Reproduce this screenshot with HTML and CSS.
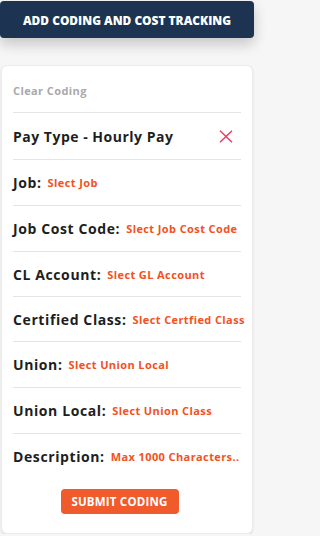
FILE: index.html
```html
<!DOCTYPE html>
<html>
<head>
<meta charset="utf-8">
<link rel="stylesheet" href="styles.css">
</head>
<body>
<button class="top-btn">ADD CODING AND COST TRACKING</button>
<div class="card">
  <div class="row clear-row"><span class="clear">Clear Coding</span></div>
  <div class="row pay-row">
    <span class="pay">Pay Type - Hourly Pay</span>
    <svg class="x" width="14" height="13" viewBox="0 0 14 13"><path d="M1 0.8 L13 12.2 M13 0.8 L1 12.2" stroke="#ee3d63" stroke-width="1.5" fill="none"/></svg>
  </div>
  <div class="row r46"><span class="label">Job:</span><span class="val">Slect Job</span></div>
  <div class="row r46"><span class="label">Job Cost Code:</span><span class="val">Slect Job Cost Code</span></div>
  <div class="row r45"><span class="label">CL Account:</span><span class="val">Slect GL Account</span></div>
  <div class="row r45"><span class="label">Certified Class:</span><span class="val">Slect Certfied Class</span></div>
  <div class="row r46"><span class="label">Union:</span><span class="val">Slect Union Local</span></div>
  <div class="row r46"><span class="label">Union Local:</span><span class="val">Slect Union Class</span></div>
  <div class="row desc-row"><span class="label">Description:</span><span class="val">Max 1000 Characters..</span></div>
  <div class="submit-wrap"><button class="submit">SUBMIT CODING</button></div>
</div>
</body>
</html>
```
FILE: styles.css
```css
* { box-sizing: border-box; }
html { background: #f6f6f6; }
html, body { margin: 0; padding: 0; }
body {
  font-family: "Open Sans", "Liberation Sans", sans-serif;
  padding-top: 1px;
}
.top-btn {
  display: block;
  width: 254px;
  height: 37px;
  margin: 0;
  border: none;
  border-radius: 4px;
  background: #1c3352;
  color: #fff;
  font-family: inherit;
  font-weight: 800;
  font-size: 11.9px;
  box-shadow: 0 6px 14px rgba(0,0,0,0.2);
  padding: 0;
}
.card {
  margin: 27px 0 0 1px;
  width: 252px;
  height: 469px;
  background: #fff;
  border: 1px solid #ececec;
  border-radius: 6px;
  box-shadow: 0 1px 2px rgba(0,0,0,0.12);
  padding: 0 11px;
  display: flex;
  flex-direction: column;
}
.row {
  display: flex;
  align-items: center;
  gap: 6px;
  border-bottom: 1px solid #e4e4e4;
  flex: none;
}
.r46 { height: 46px; }
.r45 { height: 45px; }
.clear-row { height: 47px; padding-top: 2px; }
.pay-row { height: 47px; justify-content: space-between; padding-right: 8px; }
.clear { color: #a9a9a9; font-weight: 700; font-size: 11px; letter-spacing: 0.4px; }
.pay { color: #1e1e1e; font-weight: 700; font-size: 14px; letter-spacing: 0.5px; }
.label { color: #1e1e1e; font-weight: 700; font-size: 14px; letter-spacing: 0.6px; white-space: nowrap; }
.val { color: #f4511e; font-weight: 700; font-size: 11px; letter-spacing: 0.4px; white-space: nowrap; }
.desc-row { border-bottom: none; height: 44px; }
.submit-wrap { display: flex; justify-content: center; padding-right: 15px; margin-top: 11px; }
.submit {
  width: 118px;
  height: 25px;
  border: none;
  border-radius: 4px;
  background: #f15a2b;
  color: #fff;
  font-family: inherit;
  font-weight: 700;
  font-size: 11.5px;
  letter-spacing: 0.2px;
  padding: 0;
}
```
